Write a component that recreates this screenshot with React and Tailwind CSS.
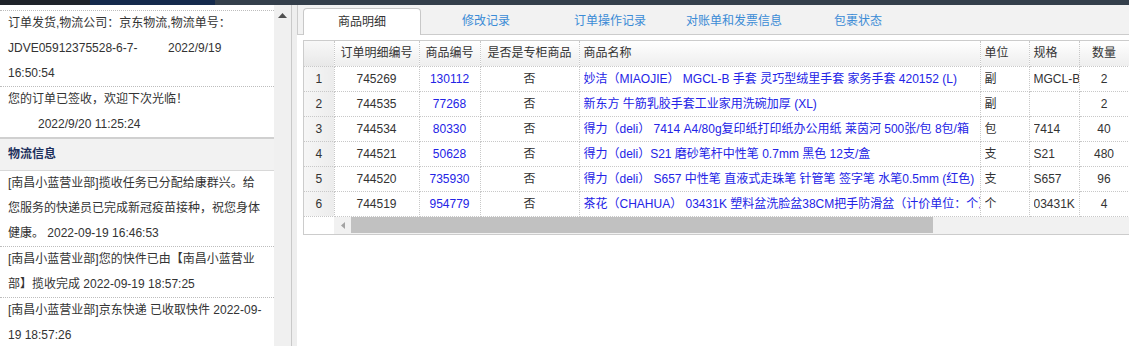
import React from "react";

const F = { fontFamily: '"Liberation Sans", Arial, "Noto Sans CJK SC", sans-serif' };

const rows = [
  ["1", "745269", "130112", "否", "妙洁（MIAOJIE） MGCL-B 手套 灵巧型绒里手套 家务手套 420152 (L)", "副", "MGCL-B", "2"],
  ["2", "744535", "77268", "否", "新东方 牛筋乳胶手套工业家用洗碗加厚 (XL)", "副", "", "2"],
  ["3", "744534", "80330", "否", "得力（deli） 7414 A4/80g复印纸打印纸办公用纸 莱茵河 500张/包 8包/箱", "包", "7414", "40"],
  ["4", "744521", "50628", "否", "得力（deli）S21 磨砂笔杆中性笔 0.7mm 黑色 12支/盒", "支", "S21", "480"],
  ["5", "744520", "735930", "否", "得力（deli） S657 中性笔 直液式走珠笔 针管笔 签字笔 水笔0.5mm (红色)", "支", "S657", "96"],
  ["6", "744519", "954779", "否", "茶花（CHAHUA） 03431K 塑料盆洗脸盆38CM把手防滑盆（计价单位：个）", "个", "03431K", "4"],
];

function Line({ children, className = "" }) {
  return <div className={"h-[25px] leading-[25px] whitespace-nowrap px-[8px] " + className}>{children}</div>;
}

function Clip({ children, w }) {
  return <div className={"overflow-hidden whitespace-nowrap " + w}>{children}</div>;
}

export default function App() {
  return (
    <div style={F} className="w-[1129px] h-[346px] overflow-hidden bg-white text-[12px] text-[#333]">
      <div className="flex h-[5px]">
        <div className="w-[90px] bg-[#1f232a]" />
        <div className="w-[125px] bg-[#142a4c]" />
        <div className="flex-1 bg-[#343f4b]" />
      </div>
      <div className="flex h-[341px]">
        {/* left panel */}
        <div className="w-[274px] bg-white overflow-hidden">
          <div className="h-[6px] border-b border-dotted border-[#bdbdbd]" />
          <div className="border-b border-dotted border-[#bdbdbd]">
            <Line>订单发货,物流公司：京东物流,物流单号：</Line>
            <Line>
              <span className="inline-block w-[160px]">JDVE05912375528-6-7-</span>2022/9/19
            </Line>
            <Line>16:50:54</Line>
          </div>
          <div className="border-b-2 border-[#d0d0d0]">
            <Line>您的订单已签收，欢迎下次光临！</Line>
            <Line className="pl-[38px]">2022/9/20 11:25:24</Line>
          </div>
          <div className="h-[32px] leading-[31px] px-[8px] bg-[#f2f2f2] border-b border-[#d8d8d8] font-bold text-[#1d2f5c]">
            物流信息
          </div>
          <div className="border-b border-dotted border-[#bdbdbd]">
            <Line>[南昌小蓝营业部]揽收任务已分配给康群兴。给</Line>
            <Line>您服务的快递员已完成新冠疫苗接种，祝您身体</Line>
            <Line>健康。 2022-09-19 16:46:53</Line>
          </div>
          <div className="border-b border-dotted border-[#bdbdbd]">
            <Line>[南昌小蓝营业部]您的快件已由【南昌小蓝营业</Line>
            <Line>部】揽收完成 2022-09-19 18:57:25</Line>
          </div>
          <div>
            <Line>[南昌小蓝营业部]京东快递 已收取快件 2022-09-</Line>
            <Line>19 18:57:26</Line>
          </div>
        </div>
        {/* vertical scrollbar */}
        <div className="w-[17px] bg-[#f0f0f0] flex justify-center pt-[8px]">
          <svg width="9" height="5" viewBox="0 0 9 5">
            <polygon points="4.5,0 9,5 0,5" fill="#505050" />
          </svg>
        </div>
        <div className="w-[1px] bg-[#c9c9c9]" />
        <div className="w-[5px] bg-[#eeeeee]" />
        {/* right panel */}
        <div className="flex-1 flex flex-col">
          <div className="h-[30px] bg-[#f2f2f2] border-l border-b border-[#cccccc] flex items-end pl-[5px] gap-[6px]">
            <div className="w-[118px] h-[27px] -mb-px bg-white border border-b-0 border-[#c8c8c8] rounded-t-[4px] flex items-center justify-center text-[#333] text-[12px]">
              商品明细
            </div>
            {["修改记录", "订单操作记录", "对账单和发票信息", "包裹状态"].map((t) => (
              <div key={t} className="w-[118px] h-[27px] flex items-center justify-center text-[#3a8bd6] text-[12px]">
                {t}
              </div>
            ))}
          </div>
          <div className="flex-1 bg-white pl-[6px] pt-[5px]">
            <div className="w-[826px] border-l border-t border-b border-[#cccccc]">
              <table className="table-fixed border-collapse w-[825px]">
                <colgroup>
                  <col className="w-[30px]" />
                  <col className="w-[85px]" />
                  <col className="w-[61px]" />
                  <col className="w-[99px]" />
                  <col className="w-[401px]" />
                  <col className="w-[49px]" />
                  <col className="w-[50px]" />
                  <col className="w-[50px]" />
                </colgroup>
                <thead>
                  <tr className="h-[25px] bg-gradient-to-b from-white to-[#eeeeee]">
                    <th className="p-0 border-r border-b border-dotted border-[#c8c8c8] bg-gradient-to-b from-[#f8f8f8] to-[#e8e8e8]" />
                    {["订单明细编号", "商品编号", "是否是专柜商品"].map((h) => (
                      <th key={h} className="p-0 font-normal text-center border-r border-b border-dotted border-[#c8c8c8] whitespace-nowrap overflow-hidden">
                        {h}
                      </th>
                    ))}
                    {["商品名称", "单位", "规格"].map((h) => (
                      <th key={h} className="p-0 pl-[4px] font-normal text-left border-r border-b border-dotted border-[#c8c8c8] whitespace-nowrap overflow-hidden">
                        {h}
                      </th>
                    ))}
                    <th className="p-0 font-normal text-center border-r border-b border-dotted border-[#c8c8c8]">数量</th>
                  </tr>
                </thead>
                <tbody>
                  {rows.map((r) => (
                    <tr key={r[0]} className="h-[25px]">
                      <td className="p-0 text-center border-r border-b border-dotted border-[#c8c8c8] bg-gradient-to-r from-[#f6f6f6] to-[#ececec]">{r[0]}</td>
                      <td className="p-0 text-center border-r border-b border-dotted border-[#c8c8c8]">{r[1]}</td>
                      <td className="p-0 text-center text-[#2323e6] border-r border-b border-dotted border-[#c8c8c8]">{r[2]}</td>
                      <td className="p-0 text-center border-r border-b border-dotted border-[#c8c8c8]">{r[3]}</td>
                      <td className="p-0 pl-[4px] text-left text-[#2323e6] border-r border-b border-dotted border-[#c8c8c8]">
                        <Clip w="w-[396px]">{r[4]}</Clip>
                      </td>
                      <td className="p-0 pl-[4px] text-left border-r border-b border-dotted border-[#c8c8c8]">
                        <Clip w="w-[44px]">{r[5]}</Clip>
                      </td>
                      <td className="p-0 pl-[4px] text-left border-r border-b border-dotted border-[#c8c8c8]">
                        <Clip w="w-[45px]">{r[6]}</Clip>
                      </td>
                      <td className="p-0 text-center border-r border-b border-dotted border-[#c8c8c8]">{r[7]}</td>
                    </tr>
                  ))}
                </tbody>
              </table>
              <div className="flex h-[17px]">
                <div className="w-[30px] bg-white" />
                <div className="flex-1 bg-[#f1f1f1] flex items-center">
                  <div className="w-[17px] flex justify-center">
                    <svg width="4" height="7" viewBox="0 0 4 7">
                      <polygon points="0,3.5 4,0 4,7" fill="#a3a3a3" />
                    </svg>
                  </div>
                  <div className="w-[582px] h-[16px] bg-[#c1c1c1]" />
                </div>
              </div>
            </div>
          </div>
        </div>
      </div>
    </div>
  );
}
